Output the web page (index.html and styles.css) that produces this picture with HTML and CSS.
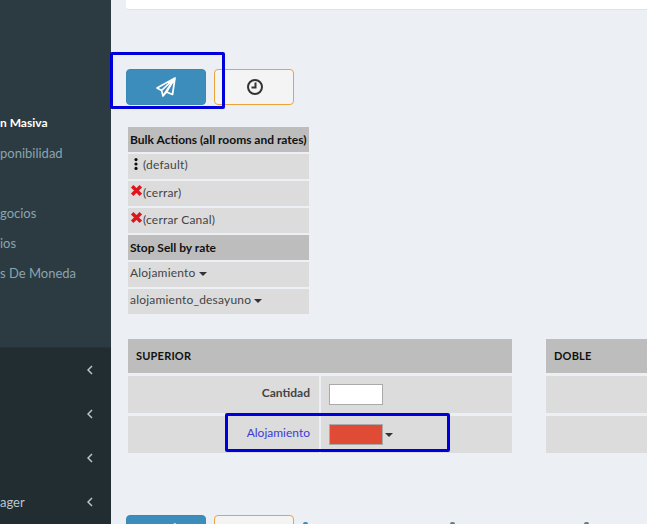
FILE: index.html
```html
<!DOCTYPE html>
<html lang="es">
<head>
<meta charset="utf-8">
<title>Actualización Masiva</title>
<link rel="stylesheet" href="styles.css">
</head>
<body>
<div class="app">
  <aside class="sidebar">
    <nav class="nav-top">
      <a class="nav-item active">n Masiva</a>
      <a class="nav-item">ponibilidad</a>
      <a class="nav-item"></a>
      <a class="nav-item">gocios</a>
      <a class="nav-item">ios</a>
      <a class="nav-item">s De Moneda</a>
    </nav>
    <nav class="nav-bottom">
      <a class="nav-group"><span></span><svg class="chev" viewBox="0 0 6 10"><polyline points="5,1 1,5 5,9"/></svg></a>
      <a class="nav-group"><span></span><svg class="chev" viewBox="0 0 6 10"><polyline points="5,1 1,5 5,9"/></svg></a>
      <a class="nav-group"><span></span><svg class="chev" viewBox="0 0 6 10"><polyline points="5,1 1,5 5,9"/></svg></a>
      <a class="nav-group"><span>ager</span><svg class="chev" viewBox="0 0 6 10"><polyline points="5,1 1,5 5,9"/></svg></a>
    </nav>
  </aside>
  <main class="main">
    <div class="card"></div>
    <div class="toolbar">
      <button class="btn btn-send" type="button">
        <svg class="ico-plane" viewBox="0 0 20 20"><path d="M19 1 16.5 17.5 10.5 15 7 19 5.6 13.4 1 11Z M19 1 5.6 13.4 M19 1 7 19 M19 1 10.5 15"/></svg>
      </button>
      <button class="btn btn-clock" type="button">
        <svg class="ico-clock" viewBox="0 0 18 18"><circle cx="9" cy="9" r="7"/><polyline points="9.5,4.5 9.5,9.5 5.5,9.5"/></svg>
      </button>
    </div>
    <table class="bulk">
      <tr><th>Bulk Actions (all rooms and rates)</th></tr>
      <tr><td><svg class="ico-dots" viewBox="0 0 4 12"><circle cx="2" cy="1.6" r="1.6"/><circle cx="2" cy="6" r="1.6"/><circle cx="2" cy="10.4" r="1.6"/></svg>(default)</td></tr>
      <tr><td><svg class="ico-x" viewBox="0 0 12 12"><path d="M2 2 10 10 M10 2 2 10"/></svg>(cerrar)</td></tr>
      <tr><td><svg class="ico-x" viewBox="0 0 12 12"><path d="M2 2 10 10 M10 2 2 10"/></svg>(cerrar Canal)</td></tr>
      <tr><th>Stop Sell by rate</th></tr>
      <tr><td>Alojamiento <i class="caret"></i></td></tr>
      <tr><td>alojamiento_desayuno <i class="caret"></i></td></tr>
    </table>
    <div class="rooms">
      <table class="room">
        <tr><th colspan="2">SUPERIOR</th></tr>
        <tr><td class="label strong">Cantidad</td><td class="value"><input class="qty" type="text"></td></tr>
        <tr><td class="label link">Alojamiento</td><td class="value"><span class="status"></span><i class="caret"></i></td></tr>
      </table>
      <table class="room">
        <tr><th colspan="2">DOBLE</th></tr>
        <tr><td class="label"></td><td class="value"></td></tr>
        <tr><td class="label"></td><td class="value"></td></tr>
      </table>
    </div>
    <div class="toolbar toolbar-bottom">
      <button class="btn btn-send" type="button">
        <svg class="ico-plane" viewBox="0 0 20 20"><path d="M19 1 16.5 17.5 10.5 15 7 19 5.6 13.4 1 11Z M19 1 5.6 13.4 M19 1 7 19 M19 1 10.5 15"/></svg>
      </button>
      <button class="btn btn-clock" type="button"></button>
      <span class="peek peek-blue"></span>
      <span class="peek peek-mid"></span>
      <span class="peek peek-end"></span>
    </div>
  </main>
</div>
<div class="mark mark-send"></div>
<div class="mark mark-status"></div>
</body>
</html>
```
FILE: styles.css
```css
* { box-sizing: border-box; }
html, body {
  margin: 0;
  height: 524px;
  overflow: hidden;
}
body {
  font-family: Lato, "Noto Sans", sans-serif;
  font-size: 12px;
  color: #444;
  background: #ecf0f5;
}
.app {
  display: flex;
  height: 524px;
  overflow: hidden;
}
.sidebar {
  flex: 0 0 111px;
  display: flex;
  flex-direction: column;
  background: #2c3b41;
  overflow: hidden;
}
.nav-top {
  display: flex;
  flex-direction: column;
  height: 348px;
  padding-top: 108px;
}
.nav-item {
  height: 30px;
  line-height: 30px;
  font-size: 13px;
  color: #8aa4af;
  white-space: nowrap;
}
.nav-item.active {
  color: #fff;
  font-size: 12px;
  font-weight: 700;
}
.nav-bottom {
  flex: 1;
  display: flex;
  flex-direction: column;
  background: #222d32;
  border-top: 1px solid #263238;
}
.nav-group {
  flex: 0 0 44px;
  display: flex;
  align-items: center;
  justify-content: space-between;
  padding-right: 18px;
  font-size: 13px;
  color: #b8c7ce;
}
.chev {
  width: 6px;
  height: 10px;
  fill: none;
  stroke: #b8c7ce;
  stroke-width: 1.5;
}
.main {
  flex: 1;
  min-width: 0;
  padding-left: 15px;
  overflow: hidden;
}
.card {
  height: 10px;
  background: #fff;
  border-bottom: 1px solid #dfe3e8;
  border-bottom-left-radius: 3px;
}
.toolbar {
  display: flex;
  gap: 8px;
  margin-top: 59px;
}
.btn {
  flex: 0 0 80px;
  height: 36px;
  padding: 0;
  border-radius: 4px;
  display: flex;
  align-items: center;
  justify-content: center;
}
.btn-send {
  background: #3c8dbc;
  border: 1px solid #3a88b6;
}
.btn-clock {
  background: #f4f4f4;
  border: 1px solid #eba43c;
}
.ico-plane {
  width: 20px;
  height: 20px;
  margin-top: -1px;
  fill: none;
  stroke: #fff;
  stroke-width: 1.7;
  stroke-linejoin: round;
}
.ico-clock {
  width: 18px;
  height: 18px;
  margin-top: -1px;
  margin-left: 1px;
  fill: none;
  stroke: #333;
  stroke-width: 2;
}
.peek {
  flex: none;
  width: 5px;
  height: 2px;
  margin-top: 7px;
  border-radius: 2px 2px 0 0;
  background: #6f7780;
}
.peek-blue {
  margin-left: 1px;
  background: #3c8dbc;
}
.peek-mid {
  margin-left: 134px;
}
.peek-end {
  margin-left: 121px;
}
.bulk {
  margin-top: 20px;
  width: 185px;
  border-collapse: separate;
  border-spacing: 2px;
  table-layout: fixed;
}
.bulk th, .bulk td {
  height: 25px;
  padding: 0 2px 1px;
  text-align: left;
  white-space: nowrap;
  font-size: 12px;
}
.bulk th {
  background: #bdbdbd;
  color: #111;
  font-weight: 700;
}
.bulk td {
  background: #dcdcdc;
  padding-bottom: 4px;
  letter-spacing: 0.2px;
}
.ico-dots {
  display: inline-block;
  width: 4px;
  height: 12px;
  margin: 0 5px 0 4px;
  vertical-align: -1px;
  fill: #111;
}
.ico-x {
  display: inline-block;
  width: 13px;
  height: 13px;
  vertical-align: 0;
  fill: none;
  stroke: #e0141c;
  stroke-width: 3.2;
}
.caret {
  display: inline-block;
  width: 0;
  height: 0;
  vertical-align: middle;
  border-top: 4px solid #333;
  border-left: 4px solid transparent;
  border-right: 4px solid transparent;
}
.rooms {
  display: flex;
  gap: 30px;
  margin-top: 20px;
}
.room {
  flex: 0 0 388px;
  width: 388px;
  border-collapse: separate;
  border-spacing: 2px 3px;
  table-layout: fixed;
}
.room th {
  height: 34px;
  padding: 0 8px 1px;
  background: #bdbdbd;
  color: #111;
  font-size: 11px;
  letter-spacing: 0.2px;
  font-weight: 700;
  text-align: left;
}
.room td {
  height: 37px;
  background: #dcdcdc;
}
.room .label {
  padding: 0 9px 5px 0;
  text-align: right;
}
.room .value {
  padding-left: 8px;
}
.strong {
  font-weight: 700;
  color: #444;
}
.link {
  color: #3b3bd6;
}
.qty, .status {
  display: inline-block;
  width: 54px;
  height: 21px;
  margin: 0;
  padding: 0;
  border: 1px solid #aaa;
  vertical-align: middle;
  background: #fff;
}
.status {
  background: #e04b35;
  margin-right: 2px;
}
.mark {
  position: absolute;
  border: 3px solid #0000dc;
  border-radius: 2px;
}
.mark-send {
  left: 110px;
  top: 52px;
  width: 115px;
  height: 57px;
}
.mark-status {
  left: 225px;
  top: 413px;
  width: 225px;
  height: 39px;
}
```
